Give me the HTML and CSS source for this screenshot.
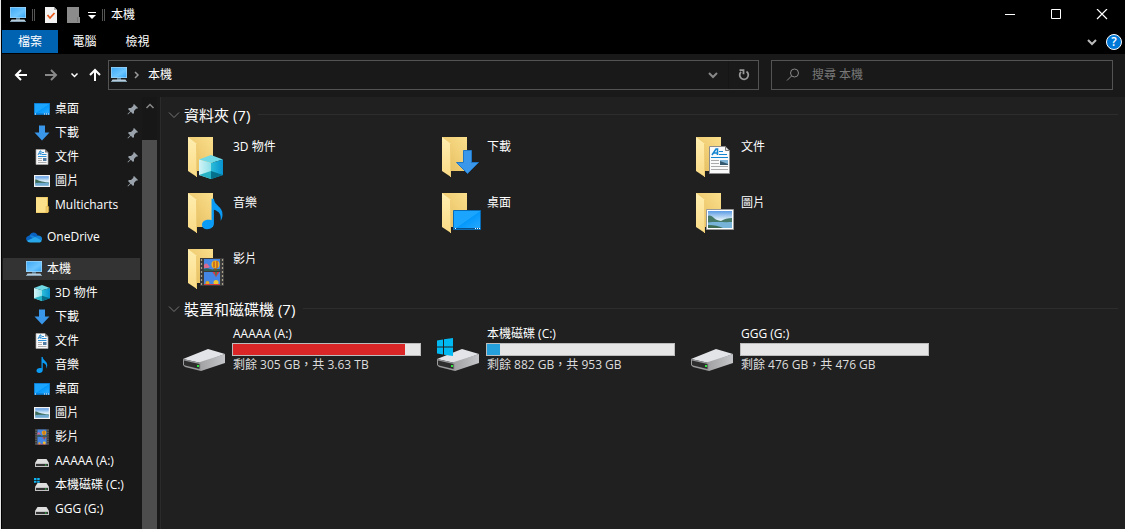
FILE: index.html
```
<!DOCTYPE html>
<html lang="zh-Hant">
<head>
    <meta charset="UTF-8">
    <meta name="viewport" content="width=device-width, initial-scale=1.0">
    <title>本機</title>
    <link rel="stylesheet" href="styles.css">
</head>
<body>
<!-- shared icons -->
<svg class="sprite" width="0" height="0" aria-hidden="true">
    <defs>
        <linearGradient id="g-screen" x1="0" y1="0" x2="1" y2="1">
            <stop offset="0" stop-color="#3fa9f5"/><stop offset=".6" stop-color="#6cc5ff"/><stop offset="1" stop-color="#38a8f8"/>
        </linearGradient>
        <linearGradient id="g-desk" x1="0" y1="0" x2="1" y2="1">
            <stop offset="0" stop-color="#1ba5ff"/><stop offset=".5" stop-color="#1ba5ff"/><stop offset=".52" stop-color="#0498fb"/><stop offset="1" stop-color="#2aaaff"/>
        </linearGradient>
        <linearGradient id="g-back" x1="0" y1="1" x2="1" y2="0">
            <stop offset="0" stop-color="#e3bb5c"/><stop offset="1" stop-color="#fbdf8c"/>
        </linearGradient>
        <linearGradient id="g-front" x1="0" y1="0" x2="0" y2="1">
            <stop offset="0" stop-color="#ffeeb0"/><stop offset="1" stop-color="#fadb86"/>
        </linearGradient>
        <linearGradient id="g-sky" x1="0" y1="0" x2="0" y2="1">
            <stop offset="0" stop-color="#5c9be4"/><stop offset=".5" stop-color="#d8ecf8"/><stop offset="1" stop-color="#d8ecf8"/>
        </linearGradient>
        <linearGradient id="g-cube" x1="0" y1="0" x2="1" y2="0">
            <stop offset="0" stop-color="#d2f4f7"/><stop offset="1" stop-color="#8fe0ea"/>
        </linearGradient>
        <linearGradient id="g-cube2" x1="0" y1="0" x2="1" y2="0">
            <stop offset="0" stop-color="#2cbdd8"/><stop offset="1" stop-color="#0792cf"/>
        </linearGradient>
        <linearGradient id="g-drive" x1="0" y1="0" x2="1" y2="0">
            <stop offset="0" stop-color="#a2a2a4"/><stop offset="1" stop-color="#c4c5c8"/>
        </linearGradient>
    </defs>

    <symbol id="pc" viewBox="0 0 16 16">
        <path d="M0 0h16v11H0z" fill="#9fd3f5"/>
        <path d="M.7.7h14.600v9.600H.7z" fill="url(#g-screen)"/>
        <path d="M6 11h4v2H6z" fill="#5d8198"/>
        <path d="M1.500 12.500h13l1.500 2.500H0z" fill="#b8cddb"/>
        <path d="M0 14.200h16v.8H0z" fill="#7695a8"/>
    </symbol>
    <symbol id="desktop" viewBox="0 0 16 16">
        <path d="M0 2h16v12H0z" fill="#0b6fbd"/>
        <path d="M.7 2.700h14.600v9.800H.7z" fill="url(#g-desk)"/>
        <path d="M1 12.500h1v1H1zM10 12.500h1v1h-1zM12 12.500h1v1h-1zM14 12.500h1v1h-1z" fill="#fff"/>
    </symbol>
    <symbol id="download" viewBox="0 0 16 16">
        <path d="M5 .5h6v7h4.500L8 15.500.5 7.500H5z" fill="#3a96e8"/>
    </symbol>
    <symbol id="document" viewBox="0 0 16 16">
        <path d="M2 .5h9l3 3v12H2z" fill="#f7f8fa" stroke="#a9a9a9" stroke-width=".7"/>
        <path d="M11 .5v3h3z" fill="#777"/>
        <path d="M4 6l2-4h1v4M5 4.700h2M8 3.500h2M8 5.500h4.500M4 7.500h8.500" fill="none" stroke="#1685d1" stroke-width=".9"/>
        <path d="M4 9.500h4M4 11.500h4M4 13.500h8.500" stroke="#999" stroke-width=".8"/>
        <path d="M9 9h3.500v3H9z" fill="#517ba1"/>
    </symbol>
    <symbol id="picture" viewBox="0 0 16 16">
        <path d="M0 2h16v12H0z" fill="#f3f3f3"/>
        <path d="M1.200 3.200h13.600v9.600H1.200z" fill="url(#g-sky)"/>
        <path d="M1.200 6.500c2-.5 3 1 5 1.500s4 1 8.600 1.500V11H1.200z" fill="#3d6b57"/>
        <path d="M1.200 10c5-.5 9 0 13.600-.5v3.300H1.200z" fill="#6fa9cf"/>
    </symbol>
    <symbol id="folder-small" viewBox="0 0 16 16">
        <path d="M2 0h12v16H2z" fill="#e5bd53"/>
        <path d="M2 .5h11V15.500H2z" fill="#fde08a"/>
        <path d="M12 9.500h2.700V15L12 16z" fill="#f5cf6c" stroke="#d9ae44" stroke-width=".5"/>
    </symbol>
    <symbol id="onedrive" viewBox="0 0 16 16">
        <path d="M1 12C-1 9.500.5 7 3.500 6.500 5 3 9.500 2 11.800 6.500L9 10z" fill="#0a62c0"/>
        <path d="M3.500 6.500c2-.6 4 .2 5.500 1.500l3-1.500c3 0 4.500 2 4 4.500l-7 1z" fill="#1583d8"/>
        <path d="M1 11.800L9 8l6.800 3.500c-.5 1.400-1.500 2-2.800 2H4c-1.400 0-2.500-.6-3-1.700z" fill="#28a8ea"/>
    </symbol>
    <symbol id="cube" viewBox="0 0 24 24">
        <path d="M0 4.500L12 0l12 4.500L12 8z" fill="#6fd9e6"/>
        <path d="M0 4.500L12 8v16L0 20z" fill="url(#g-cube)"/>
        <path d="M12 8l12-3.500V20l-12 4z" fill="url(#g-cube2)"/>
        <path d="M0 20l12-4v8z" fill="#27b2c6"/>
        <path d="M12 16l12 4-12 4z" fill="#05708c"/>
    </symbol>
    <symbol id="music" viewBox="0 0 22 32">
        <path d="M10 0h2.500c0 7 9.500 8 9 17-.2 3-1 4.500-2 6 1-7-2-10-7-11.500V26c0 3.500-3 6-7 6-3.500 0-5.500-2-5.500-4.500C0 24 3 22 7 22c1 0 2 0 3 .5z" fill="#0a9bf5"/>
    </symbol>
    <symbol id="film" viewBox="0 0 24 28">
        <path d="M0 0h24v28H0z" fill="#3b3b3b"/>
        <path d="M4 1h16v12H4zM4 14h16v13H4z" fill="#4585e4"/>
        <path d="M1.500 1v26M22.500 1v26" stroke="#a9a189" stroke-width="1.200" stroke-dasharray="2 2"/>
        <path d="M4 7c2-2 3-2 5 1l1 1-2 1H4z" fill="#d96b90"/>
        <path d="M4 11c2-1 4-1 6 0s4 0 10 0v2H4z" fill="#2d5f55"/>
        <circle cx="15.500" cy="6.500" r="4" fill="#f0b51b"/>
        <path d="M13.500 3.500h1v6h-1zM16.500 3h1v7h-1z" fill="#a93324"/>
        <path d="M14 10.500h3v2h-3z" fill="#7a5522"/>
        <path d="M12.500 14h7L16 19z" fill="#dd3545"/>
        <path d="M15 14h2l-1 5z" fill="#2b8a4b"/>
        <circle cx="7.500" cy="25" r="2" fill="#e9a91f"/>
        <circle cx="16" cy="24.500" r="2.500" fill="#f2c52c"/>
        <path d="M4 26h16v1H4z" fill="#d93b3b"/>
    </symbol>
    <symbol id="drive-small" viewBox="0 0 16 16">
        <path d="M3.500 6h9l2.500 4H1z" fill="#dededf"/>
        <path d="M1 10h14v4H1z" fill="#c2c2c4"/>
        <path d="M2 11h12v2H2z" fill="#333"/>
        <path d="M11 11.500h1.500v1H11z" fill="#33d64b"/>
    </symbol>
    <symbol id="system-small" viewBox="0 0 16 16">
        <use href="#drive-small"/>
        <path d="M0 1h2.500v2H0zM3.200 1h2.500v2H3.200zM0 3.700h2.500v2H0zM3.200 3.700h2.500v2H3.200z" fill="#10b3ef"/>
    </symbol>
    <symbol id="pin" viewBox="0 0 12 12">
        <path d="M7 1l4 4-1 .8-.8-.2L7 8v2l-1 1-2.200-2.200L1 11.500l-.5-.5 2.700-2.800L1 6l1-1h2l2.400-2.200L6.200 2z" fill="#9aa3ab"/>
    </symbol>
    <symbol id="chevron" viewBox="0 0 12 8">
        <path d="M1 1.500l5 5 5-5" fill="none" stroke="currentColor"/>
    </symbol>
    <symbol id="chevron-bold" viewBox="0 0 12 8">
        <path d="M2 2l4 4 4-4" fill="none" stroke="currentColor" stroke-width="2"/>
    </symbol>

    <symbol id="folder" viewBox="0 0 48 48">
        <path d="M8 4h25v34H14z" fill="url(#g-back)"/>
        <path d="M8 4l9 7v33l-9-6z" fill="url(#g-front)"/>
        <path d="M16.500 11v33" stroke="#f0ce78"/>
    </symbol>
    <symbol id="drive" viewBox="0 0 48 48">
        <path d="M3 33l25-10 17 5-24 9z" fill="#e3e4e8"/>
        <path d="M20 36l25-8v9L21 45z" fill="url(#g-drive)"/>
        <path d="M3 33l18 4v8L5 41l-2-2z" fill="#98999b"/>
        <path d="M4 34.500l15.500 3.500v5L5 39.500l-1-1z" fill="#2e2e2f"/>
        <path d="M17 39h2v2h-2z" fill="#2ee63d"/>
    </symbol>
</svg>

<div class="window">
    <header class="titlebar">
        <svg class="icon title-icon"><use href="#pc"/></svg>
        <span class="divider"></span>
        <button class="quick quick-check" aria-label="內容">
            <svg width="12" height="16" viewBox="0 0 12 16"><path d="M0 0h9l3 3v13H0z" fill="#f2f2f2"/><path d="M9 0v3h3z" fill="#aaa"/><path d="M2.500 8l2.500 3 4.500-5" fill="none" stroke="#e8591c" stroke-width="1.800"/></svg>
        </button>
        <button class="quick quick-new" aria-label="新增資料夾">
            <svg width="13" height="16" viewBox="0 0 13 16"><path d="M0 0h12v10h1v6H0z" fill="#8b8b8b"/><path d="M10.500 10v5" stroke="#777"/></svg>
        </button>
        <button class="quick quick-more" aria-label="自訂快速存取工具列">
            <svg width="8" height="8" viewBox="0 0 8 8"><path d="M0 1.500h8" stroke="#fff"/><path d="M0 4h8L4 8z" fill="#fff"/></svg>
        </button>
        <span class="divider"></span>
        <h1 class="title">本機</h1>
        <div class="window-buttons">
            <button aria-label="最小化"><svg width="12" height="12"><path d="M1 5.500h10" stroke="#fff"/></svg></button>
            <button aria-label="最大化"><svg width="12" height="12"><path d="M1.500.5h9v9h-9z" fill="none" stroke="#fff"/></svg></button>
            <button aria-label="關閉"><svg width="12" height="12"><path d="M1 0l10 10M11 0L1 10" stroke="#fff" stroke-width="1.200"/></svg></button>
        </div>
    </header>

    <nav class="ribbon">
        <button class="tab active">檔案</button>
        <button class="tab">電腦</button>
        <button class="tab">檢視</button>
        <div class="ribbon-right">
            <button class="expand" aria-label="展開功能區"><svg width="12" height="8"><use href="#chevron-bold"/></svg></button>
            <button class="help" aria-label="說明">?</button>
        </div>
    </nav>

    <div class="toolbar">
        <button class="nav-btn" aria-label="上一頁"><svg width="14" height="12" viewBox="0 0 14 12"><path d="M13 6H2M7 1L2 6l5 5" fill="none" stroke="#fff" stroke-width="2"/></svg></button>
        <button class="nav-btn off" aria-label="下一頁"><svg width="14" height="12" viewBox="0 0 14 12"><path d="M1 6h11M7 1l5 5-5 5" fill="none" stroke="#888" stroke-width="2"/></svg></button>
        <button class="nav-btn recent" aria-label="最近的位置"><svg width="9" height="6"><use href="#chevron-bold"/></svg></button>
        <button class="nav-btn up" aria-label="上移"><svg width="12" height="14" viewBox="0 0 12 14"><path d="M6 13V2M1 7l5-5 5 5" fill="none" stroke="#fff" stroke-width="2"/></svg></button>
        <div class="address">
            <svg class="icon"><use href="#pc"/></svg>
            <svg class="crumb-arrow" width="6" height="8" viewBox="0 0 6 8"><path d="M1 1l3 3-3 3" fill="none" stroke="#999" stroke-width="1.500"/></svg>
            <a class="crumb" href="#">本機</a>
            <button class="address-drop" aria-label="先前的位置"><svg width="12" height="8"><use href="#chevron-bold"/></svg></button>
            <button class="refresh" aria-label="重新整理"><svg width="12" height="12" viewBox="0 0 12 12"><path d="M8.500 2.500a4.300 4.300 0 1 1-5.500.4M1.500 1.200h4v4" fill="none" stroke="#999" stroke-width="1.800"/></svg></button>
        </div>
        <label class="search">
            <svg width="14" height="14" viewBox="0 0 14 14"><circle cx="8.500" cy="5" r="4" fill="none" stroke="#888"/><path d="M5.500 8L1 12.500" stroke="#888"/></svg>
            <input type="search" placeholder="搜尋 本機" aria-label="搜尋 本機">
        </label>
    </div>

    <div class="content">
        <aside class="sidebar">
            <ul class="tree">
                <li><a class="child" href="#"><svg class="icon"><use href="#desktop"/></svg>桌面<svg class="pin"><use href="#pin"/></svg></a></li>
                <li><a class="child" href="#"><svg class="icon"><use href="#download"/></svg>下載<svg class="pin"><use href="#pin"/></svg></a></li>
                <li><a class="child" href="#"><svg class="icon"><use href="#document"/></svg>文件<svg class="pin"><use href="#pin"/></svg></a></li>
                <li><a class="child" href="#"><svg class="icon"><use href="#picture"/></svg>圖片<svg class="pin"><use href="#pin"/></svg></a></li>
                <li><a class="child" href="#"><svg class="icon"><use href="#folder-small"/></svg>Multicharts</a></li>
                <li class="root"><a href="#"><svg class="icon"><use href="#onedrive"/></svg>OneDrive</a></li>
                <li class="root"><a class="selected" href="#"><svg class="icon"><use href="#pc"/></svg>本機</a></li>
                <li><a class="child" href="#"><svg class="icon"><use href="#cube"/></svg>3D 物件</a></li>
                <li><a class="child" href="#"><svg class="icon"><use href="#download"/></svg>下載</a></li>
                <li><a class="child" href="#"><svg class="icon"><use href="#document"/></svg>文件</a></li>
                <li><a class="child" href="#"><svg class="icon"><use href="#music"/></svg>音樂</a></li>
                <li><a class="child" href="#"><svg class="icon"><use href="#desktop"/></svg>桌面</a></li>
                <li><a class="child" href="#"><svg class="icon"><use href="#picture"/></svg>圖片</a></li>
                <li><a class="child" href="#"><svg class="icon"><use href="#film"/></svg>影片</a></li>
                <li><a class="child" href="#"><svg class="icon"><use href="#drive-small"/></svg>AAAAA (A:)</a></li>
                <li><a class="child" href="#"><svg class="icon"><use href="#system-small"/></svg>本機磁碟 (C:)</a></li>
                <li><a class="child" href="#"><svg class="icon"><use href="#drive-small"/></svg>GGG (G:)</a></li>
            </ul>
            <div class="scrollbar">
                <svg width="10" height="6" viewBox="0 0 10 6"><path d="M1.500 5L5 1.500 8.500 5" fill="none" stroke="#888" stroke-width="1.500"/></svg>
                <div class="thumb"></div>
            </div>
        </aside>

        <main class="main">
            <section>
                <h2 class="group"><svg width="12" height="8"><use href="#chevron"/></svg>資料夾 (7)</h2>
                <div class="tiles">
                    <a class="tile" href="#">
                        <svg class="big"><use href="#folder"/><use href="#cube" x="19" y="22" width="24" height="24"/></svg>
                        <span class="name">3D 物件</span>
                    </a>
                    <a class="tile" href="#">
                        <svg class="big"><use href="#folder"/><path d="M29.500 17.500h8v12h7L33.500 40.500l-11-11h7z" fill="#3a97ea" stroke="#1f77c6"/></svg>
                        <span class="name">下載</span>
                    </a>
                    <a class="tile" href="#">
                        <svg class="big"><use href="#folder"/>
                            <path d="M21.500 13.500h16l4 4v23h-20z" fill="#fafafa" stroke="#8d8d8d"/>
                            <path d="M37.500 13.500v4h4z" fill="#ddd" stroke="#777"/>
                            <path d="M24 22l4-6h1.500v6M26 20h3" fill="none" stroke="#1685d1" stroke-width="1.600"/>
                            <path d="M31 18.500h4M31 21.500h8M23 24.500h17" fill="none" stroke="#1685d1"/>
                            <path d="M23 27.500h8M23 30.500h8M23 33.500h17M23 36.500h17" stroke="#aaa"/>
                            <path d="M32 27h8v5h-8z" fill="#7fb3d5"/><path d="M32 28l8 3v1h-8z" fill="#34586d"/>
                        </svg>
                        <span class="name">文件</span>
                    </a>
                    <a class="tile" href="#">
                        <svg class="big"><use href="#folder"/><use href="#music" x="22" y="9" width="21" height="32"/></svg>
                        <span class="name">音樂</span>
                    </a>
                    <a class="tile" href="#">
                        <svg class="big"><use href="#folder"/>
                            <path d="M19.500 21.500h27v19h-27z" fill="url(#g-desk)" stroke="#0a6bb5"/>
                            <path d="M20 39h26v1H20z" fill="#0a4f87"/><path d="M21 39h1v1h-1zM41 39h1v1h-1zM43 39h1v1h-1zM45 39h1v1h-1z" fill="#fff"/>
                        </svg>
                        <span class="name">桌面</span>
                    </a>
                    <a class="tile" href="#">
                        <svg class="big"><use href="#folder"/>
                            <path d="M18.500 20.500h27v20h-27z" fill="#fff" stroke="#999"/>
                            <path d="M20 22h24v17H20z" fill="url(#g-sky)"/>
                            <path d="M20 27c2-1 4 0 6 2s4 2 7 3c3-2 7-3 11-3v5H20z" fill="#477968"/>
                            <path d="M20 33.500c8-1 16 0 24-.5v6H20z" fill="#78b4da"/>
                            <path d="M20 36c6 0 11 1 15 3H20z" fill="#3e6c52"/>
                        </svg>
                        <span class="name">圖片</span>
                    </a>
                    <a class="tile" href="#">
                        <svg class="big"><use href="#folder"/><use href="#film" x="20" y="13" width="24" height="28"/></svg>
                        <span class="name">影片</span>
                    </a>
                </div>
            </section>

            <section>
                <h2 class="group"><svg width="12" height="8"><use href="#chevron"/></svg>裝置和磁碟機 (7)</h2>
                <div class="tiles">
                    <a class="tile drive" href="#">
                        <svg class="big"><use href="#drive"/></svg>
                        <div class="info">
                            <span class="name">AAAAA (A:)</span>
                            <div class="bar"><div class="fill full" style="width: 92%"></div></div>
                            <span class="free">剩餘 305 GB，共 3.63 TB</span>
                        </div>
                    </a>
                    <a class="tile drive" href="#">
                        <svg class="big"><use href="#drive"/><path d="M3 14.500l6-1v7H3zM10 13.300l9-1.300v8.500h-9zM3 21.500h6v7l-6-1zM10 21.500h9V30l-9-1.300z" fill="#00b9f2"/></svg>
                        <div class="info">
                            <span class="name">本機磁碟 (C:)</span>
                            <div class="bar"><div class="fill" style="width: 7%"></div></div>
                            <span class="free">剩餘 882 GB，共 953 GB</span>
                        </div>
                    </a>
                    <a class="tile drive" href="#">
                        <svg class="big"><use href="#drive"/></svg>
                        <div class="info">
                            <span class="name">GGG (G:)</span>
                            <div class="bar"><div class="fill" style="width: 0%"></div></div>
                            <span class="free">剩餘 476 GB，共 476 GB</span>
                        </div>
                    </a>
                </div>
            </section>
        </main>
    </div>
</div>
</body>
</html>
```
FILE: styles.css
```
* {
    margin: 0;
    padding: 0;
    box-sizing: border-box;
}
body {
    background: #202020;
    color: #fff;
    font-family: "Open Sans", "Noto Sans CJK TC", sans-serif;
    font-size: 12px;
    line-height: 16px;
}
button {
    border: 0;
    background: none;
    color: inherit;
    font: inherit;
    display: flex;
    align-items: center;
    justify-content: center;
}
a {
    color: inherit;
    text-decoration: none;
}
svg {
    flex-shrink: 0;
}
.sprite {
    position: absolute;
}
.icon {
    width: 16px;
    height: 16px;
}
.window {
    height: 100vh;
    display: flex;
    flex-direction: column;
    overflow: hidden;
    border-left: 1px solid #e6e6e6;
    padding-left: 1px;
    background: #000;
}

/* title bar */
.titlebar {
    height: 30px;
    display: flex;
    align-items: center;
    padding-left: 8px;
    flex-shrink: 0;
}
.divider {
    width: 3px;
    height: 12px;
    border: 1px solid #555;
    border-width: 0 1px;
    margin-left: 6px;
}
.quick-check {
    margin-left: 10px;
}
.quick-new {
    margin-left: 10px;
}
.quick-more {
    margin-left: 8px;
}
.title {
    font-size: 12px;
    font-weight: 400;
    margin-left: 6px;
}
.window-buttons {
    display: flex;
    margin-left: auto;
}
.window-buttons button {
    width: 46px;
    height: 30px;
}

/* ribbon */
.ribbon {
    height: 24px;
    display: flex;
    flex-shrink: 0;
}
.tab {
    width: 53px;
    height: 23px;
}
.tab.active {
    width: 56px;
    background: #0063b1;
}
.ribbon-right {
    display: flex;
    align-items: center;
    gap: 8px;
    margin-left: auto;
    padding-right: 3px;
    color: #bbb;
}
.help {
    width: 16px;
    height: 16px;
    border: 1px solid #fff;
    border-radius: 50%;
    background: #0078d7;
    color: #fff;
    font-weight: 600;
    font-size: 12px;
}

/* address row */
.toolbar {
    height: 43px;
    display: flex;
    align-items: center;
    background: #191919;
    padding: 0 12px 2px 4px;
    flex-shrink: 0;
}
.nav-btn {
    width: 30px;
    height: 30px;
}
.nav-btn.recent {
    width: 16px;
}
.nav-btn.up {
    width: 26px;
}
.address {
    flex: 1;
    height: 30px;
    display: flex;
    align-items: center;
    border: 1px solid #535353;
    padding-left: 2px;
}
.crumb-arrow {
    margin-left: 7px;
}
.crumb {
    margin-left: 8px;
}
.address-drop {
    width: 30px;
    height: 28px;
    margin-left: auto;
    color: #888;
}
.refresh {
    width: 30px;
    height: 28px;
    border-left: 1px solid #151515;
}
.search {
    width: 342px;
    height: 30px;
    display: flex;
    align-items: center;
    gap: 12px;
    margin-left: 12px;
    padding-left: 14px;
    border: 1px solid #535353;
}
.search input {
    flex: 1;
    border: 0;
    outline: 0;
    background: none;
    color: #fff;
    font: inherit;
}
.search input::placeholder {
    color: #777;
}

/* navigation tree */
.content {
    flex: 1;
    display: flex;
    min-height: 0;
}
.sidebar {
    width: 158px;
    display: flex;
    overflow: hidden;
    background: #191919;
    padding-right: 3px;
    flex-shrink: 0;
}
.tree {
    flex: 1;
    list-style: none;
    padding: 1px 2px 0 1px;
}
.tree a {
    height: 22px;
    margin-bottom: 2px;
    display: flex;
    align-items: center;
    padding-left: 23px;
}
.tree a.child {
    padding-left: 31px;
}
.tree a.selected {
    background: #333;
}
.tree .icon {
    margin-right: 5px;
}
.root {
    margin-top: 10px;
}
.tree .pin {
    width: 12px;
    height: 12px;
    margin-left: auto;
    margin-right: 1px;
}
.scrollbar {
    width: 15px;
    display: flex;
    flex-direction: column;
    align-items: center;
    padding-top: 6px;
    background: #171717;
}
.thumb {
    width: 15px;
    flex: 1;
    margin-top: 31px;
    background: #4d4d4d;
}

/* file list */
.main {
    flex: 1;
    min-width: 0;
    overflow: hidden;
    background: #202020;
    border-left: 1px solid #2b2b2b;
    padding: 6px 7px 0;
}
.group {
    height: 24px;
    display: flex;
    align-items: center;
    padding-bottom: 1px;
    font-size: 15px;
    font-weight: 400;
}
.group svg {
    color: #777;
    margin-right: 4px;
}
.group::after {
    content: "";
    flex: 1;
    height: 1px;
    margin-left: 8px;
    background: #2d2d2d;
}
.tiles {
    display: grid;
    grid-template-columns: repeat(auto-fill, 254px);
    padding: 2px 0 0 12px;
}
.tile {
    height: 56px;
    display: flex;
    gap: 5px;
}
.big {
    width: 48px;
    height: 48px;
    margin-top: 4px;
}
.tile > .name {
    margin-top: 10px;
}
.drive {
    gap: 4px;
}
.drive .big {
    margin-top: 3px;
}
.info {
    width: 189px;
    display: flex;
    flex-direction: column;
    margin-top: 3px;
}
.info .name, .free {
    padding-left: 1px;
}
.bar {
    height: 13px;
    margin: 1px 0;
    border: 1px solid #bcbcbc;
    background: #e6e6e6;
}
.fill {
    height: 100%;
    background: #26a0da;
}
.fill.full {
    background: #da2626;
}
.free {
    color: #ddd;
}
```
